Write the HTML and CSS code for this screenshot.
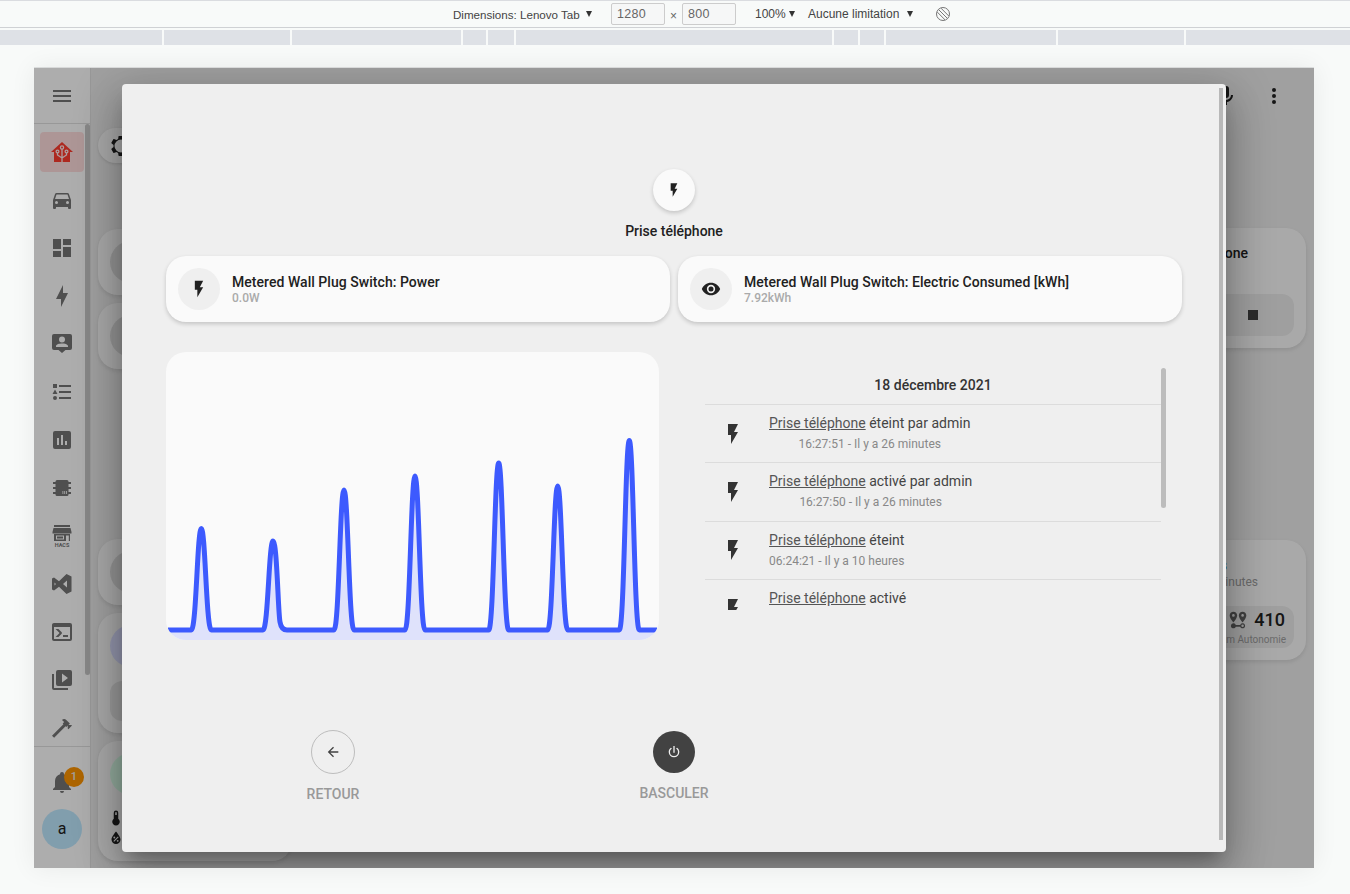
FILE: index.html
```html
<!DOCTYPE html>
<html lang="fr">
<head>
  <meta charset="UTF-8" />
  <meta name="viewport" content="width=device-width, initial-scale=1.0" />
  <title>Prise téléphone</title>
  <link rel="stylesheet" href="styles.css">
</head>
<body>
  <!-- devtools device toolbar -->
  <div class="toolbar">
    <span class="tb-device">Dimensions: Lenovo Tab</span>
    <span class="tb-arrow arrow-device"></span>
    <span class="tb-input input-w">1280</span>
    <span class="tb-times">×</span>
    <span class="tb-input input-h">800</span>
    <span class="tb-zoom">100%</span>
    <span class="tb-arrow arrow-zoom"></span>
    <span class="tb-limit">Aucune limitation</span>
    <span class="tb-arrow arrow-limit"></span>
    <svg class="tb-rotate" viewBox="0 0 16 16"><circle cx="8" cy="8" r="6.5"/><path d="M3.5 3.5L12.5 12.5M2.2 6L10 13.8M6 2.2L13.8 10"/></svg>
  </div>
  <div class="media-bar">
    <i class="seg s1"></i><i class="seg s2"></i><i class="seg s3"></i><i class="seg s4"></i><i class="seg s5"></i><i class="seg s6"></i><i class="seg s7"></i><i class="seg s8"></i><i class="seg s9"></i><i class="seg s2"></i><i class="seg s10"></i>
  </div>

  <div class="device">
    <aside class="sidebar">
      <div class="side-head">
        <svg class="icon" viewBox="0 0 24 24"><path d="M3,6H21V8H3V6M3,11H21V13H3V11M3,16H21V18H3V16Z"/></svg>
      </div>
      <div class="side-scroll">
        <nav class="side-list">
          <a class="side-item active">
            <svg class="icon home" viewBox="0 0 24 24"><path d="M12 2L23 12H20V22H4V12H1Z"/><g class="home-lines"><path d="M12 22V9M12 18L7.5 15V13M12 18L16.5 15V13"/><circle cx="12" cy="7.5" r="1.6"/><circle cx="7.5" cy="11.5" r="1.4"/><circle cx="16.5" cy="11.5" r="1.4"/></g></svg>
          </a>
          <a class="side-item"><svg class="icon" viewBox="0 0 24 24"><path d="M5,11L6.5,6.5H17.5L19,11M17.5,16A1.5,1.5 0 0,1 16,14.5A1.5,1.5 0 0,1 17.5,13A1.5,1.5 0 0,1 19,14.5A1.5,1.5 0 0,1 17.5,16M6.5,16A1.5,1.5 0 0,1 5,14.5A1.5,1.5 0 0,1 6.5,13A1.5,1.5 0 0,1 8,14.5A1.5,1.5 0 0,1 6.5,16M18.92,6C18.72,5.42 18.16,5 17.5,5H6.5C5.84,5 5.28,5.42 5.08,6L3,12V20A1,1 0 0,0 4,21H5A1,1 0 0,0 6,20V19H18V20A1,1 0 0,0 19,21H20A1,1 0 0,0 21,20V12L18.92,6Z"/></svg></a>
          <a class="side-item"><svg class="icon" viewBox="0 0 24 24"><path d="M13,3V9H21V3M13,21H21V11H13M3,21H11V15H3M3,13H11V3H3V13Z"/></svg></a>
          <a class="side-item"><svg class="icon" viewBox="0 0 24 24"><path d="M11 15H6L13 1V9H18L11 23V15Z"/></svg></a>
          <a class="side-item"><svg class="icon" viewBox="0 0 24 24"><path fill-rule="evenodd" d="M4 2H20A2 2 0 0 1 22 4V16A2 2 0 0 1 20 18H15.5L12 21L8.500 18H4A2 2 0 0 1 2 16V4A2 2 0 0 1 4 2ZM12 4.500A3 3 0 1 0 12 10.500A3 3 0 1 0 12 4.500ZM6 15V14C6 12.300 9.500 11.500 12 11.500S18 12.300 18 14V15Z"/></svg></a>
          <a class="side-item"><svg class="icon" viewBox="0 0 24 24"><path d="M5,9.5L7.5,14H2.5L5,9.5M3,4H7V8H3V4M5,20A2,2 0 0,0 7,18A2,2 0 0,0 5,16A2,2 0 0,0 3,18A2,2 0 0,0 5,20M9,5V7H21V5H9M9,19H21V17H9V19M9,13H21V11H9V13Z"/></svg></a>
          <a class="side-item"><svg class="icon" viewBox="0 0 24 24"><path fill-rule="evenodd" d="M5 3H19A2 2 0 0 1 21 5V19A2 2 0 0 1 19 21H5A2 2 0 0 1 3 19V5A2 2 0 0 1 5 3ZM7 10V17H9V10ZM11 7V17H13V7ZM15 13V17H17V13Z"/></svg></a>
          <a class="side-item"><svg class="icon" viewBox="0 0 24 24"><path fill-rule="evenodd" d="M7 4H17A1.500 1.500 0 0 1 18.500 5.500V6H21V8H18.500V11H21V13H18.500V16H21V18H18.500V18.500A1.500 1.500 0 0 1 17 20H7A1.500 1.500 0 0 1 5.500 18.500V18H3V16H5.500V13H3V11H5.500V8H3V6H5.500V5.500A1.500 1.500 0 0 1 7 4ZM12.500 15V18H13.300V15ZM14.300 15V18H15.100V15ZM16.100 15V18H16.900V15Z"/></svg></a>
          <a class="side-item"><svg class="icon" viewBox="0 0 24 24"><path fill-rule="evenodd" d="M4 1H20V3H4ZM3.500 4H20.500L21.500 8V9.500H2.500V8ZM4 10H20V17H4ZM6 11.500V15.500H14V11.500ZM7 12.500H13V14.500H7ZM16 11.500V17H18.800V11.500Z"/><text class="hacs-text" x="12" y="23.300" text-anchor="middle">HACS</text></svg></a>
          <a class="side-item"><svg class="icon" viewBox="0 0 24 24"><path fill-rule="evenodd" d="M16.500 2L21.500 4.500V19.500L16.500 22L9 14.800L4 18.500L2 17.500V6.500L4 5.500L9 9.200ZM17 8.500L13 12L17 15.500ZM4.500 10.500V13.500L6 12Z"/></svg></a>
          <a class="side-item"><svg class="icon" viewBox="0 0 24 24"><path d="M20,19V7H4V19H20M20,3A2,2 0 0,1 22,5V19A2,2 0 0,1 20,21H4A2,2 0 0,1 2,19V5C2,3.89 2.9,3 4,3H20M13,17V15H18V17H13M9.58,13L5.57,9H8.4L11.7,12.3C12.09,12.69 12.09,13.33 11.7,13.72L8.42,17H5.59L9.58,13Z"/></svg></a>
          <a class="side-item"><svg class="icon" viewBox="0 0 24 24"><path d="M4 6H2v14a2 2 0 0 0 2 2h14v-2H4V6zm16-4H8a2 2 0 0 0-2 2v12a2 2 0 0 0 2 2h12a2 2 0 0 0 2-2V4a2 2 0 0 0-2-2zm-8 12.500v-9l6 4.500-6 4.500z"/></svg></a>
          <a class="side-item"><svg class="icon" viewBox="0 0 24 24"><path d="M2 19.630L13.430 8.200L12.720 7.500L14.140 6.070L12 3.890C13.200 2.700 15.090 2.700 16.270 3.890L19.870 7.500L18.450 8.910H21.290L22 9.620L18.450 13.210L17.740 12.500V9.620L16.270 11.040L15.560 10.330L4.130 21.760L2 19.630Z"/></svg></a>
        </nav>
        <div class="side-thumb"></div>
      </div>
      <div class="side-foot">
        <div class="bell">
          <svg class="icon" viewBox="0 0 24 24"><path d="M21,19V20H3V19L5,17V11C5,7.9 7.03,5.17 10,4.29C10,4.19 10,4.1 10,4A2,2 0 0,1 12,2A2,2 0 0,1 14,4C14,4.1 14,4.19 14,4.29C16.97,5.17 19,7.9 19,11V17L21,19M14,21A2,2 0 0,1 12,23A2,2 0 0,1 10,21"/></svg>
          <span class="badge">1</span>
        </div>
        <div class="avatar">a</div>
      </div>
    </aside>

    <main class="main">
      <header class="topbar">
        <span class="top-btn"><svg class="icon dark" viewBox="0 0 24 24"><path d="M12,2A3,3 0 0,1 15,5V11A3,3 0 0,1 12,14A3,3 0 0,1 9,11V5A3,3 0 0,1 12,2M19,11C19,14.53 16.39,17.44 13,17.93V21H11V17.93C7.61,17.44 5,14.53 5,11H7A5,5 0 0,0 12,16A5,5 0 0,0 17,11H19Z"/></svg></span>
        <span class="top-btn"><svg class="icon dark" viewBox="0 0 24 24"><path d="M12,16A2,2 0 0,1 14,18A2,2 0 0,1 12,20A2,2 0 0,1 10,18A2,2 0 0,1 12,16M12,10A2,2 0 0,1 14,12A2,2 0 0,1 12,14A2,2 0 0,1 10,12A2,2 0 0,1 12,10M12,4A2,2 0 0,1 14,6A2,2 0 0,1 12,8A2,2 0 0,1 10,6A2,2 0 0,1 12,4Z"/></svg></span>
      </header>
      <div class="board">
        <div class="col-left">
          <div class="chip">
            <svg class="icon dark" viewBox="0 0 24 24"><path fill-rule="evenodd" d="M12 5.500A6.500 6.500 0 1 0 12 18.500A6.500 6.500 0 1 0 12 5.500ZM10,22C9.75,22 9.54,21.82 9.5,21.58L9.13,18.93C8.5,18.68 7.96,18.34 7.44,17.94L4.95,18.95C4.73,19.03 4.46,18.95 4.34,18.73L2.34,15.27C2.21,15.05 2.27,14.78 2.46,14.63L4.57,12.97L4.5,12L4.57,11L2.46,9.37C2.27,9.22 2.21,8.95 2.34,8.73L4.34,5.27C4.46,5.05 4.73,4.96 4.95,5.05L7.44,6.05C7.96,5.66 8.5,5.32 9.13,5.07L9.5,2.42C9.54,2.18 9.75,2 10,2H14C14.25,2 14.46,2.18 14.5,2.42L14.87,5.07C15.5,5.32 16.04,5.66 16.56,6.05L19.05,5.05C19.27,4.96 19.54,5.05 19.66,5.27L21.66,8.73C21.79,8.95 21.73,9.22 21.54,9.37L19.43,11L19.5,12L19.43,13L21.54,14.63C21.73,14.78 21.79,15.05 21.66,15.27L19.66,18.73C19.54,18.95 19.27,19.04 19.05,18.95L16.56,17.95C16.04,18.34 15.5,18.68 14.87,18.93L14.5,21.58C14.46,21.82 14.25,22 14,22H10Z"/></svg>
          </div>
          <div class="tile first"><span class="tile-dot"></span></div>
          <div class="tile"><span class="tile-dot"></span></div>
          <div class="tile second"><span class="tile-dot"></span></div>
          <div class="tile tall">
            <span class="tile-dot blue"></span>
            <span class="tile-panel"></span>
          </div>
          <div class="tile tall">
            <span class="tile-dot green"></span>
            <svg class="mini thermo" viewBox="0 0 24 24"><path d="M15 13V5A3 3 0 0 0 9 5V13A5 5 0 1 0 15 13M12 4A1 1 0 0 1 13 5V8H11V5A1 1 0 0 1 12 4Z"/></svg>
            <svg class="mini" viewBox="0 0 24 24"><path d="M12,3.25C12,3.25 6,10 6,14C6,17.32 8.69,20 12,20A6,6 0 0,0 18,14C18,10 12,3.25 12,3.25M14.47,9.97L15.53,11.03L9.53,17.03L8.47,15.97M9.75,10A1.25,1.25 0 0,1 11,11.25A1.25,1.25 0 0,1 9.75,12.5A1.25,1.25 0 0,1 8.5,11.25A1.25,1.25 0 0,1 9.75,10M14.25,14.5A1.25,1.25 0 0,1 15.5,15.75A1.25,1.25 0 0,1 14.25,17A1.25,1.25 0 0,1 13,15.75A1.25,1.25 0 0,1 14.25,14.5Z"/></svg>
          </div>
        </div>
        <div class="col-right">
          <div class="block first">
            <div class="block-name">Prise téléphone</div>
            <div class="block-panel">
              <svg class="stop" viewBox="0 0 24 24"><path d="M18,18H6V6H18V18Z"/></svg>
            </div>
          </div>
          <div class="block second">
            <div class="block-tag">Connectés</div>
            <div class="block-sub">Il y a 26 minutes</div>
            <div class="block-panel range">
              <div class="range-top">
                <svg class="range-icon" viewBox="0 0 24 24"><path d="M6.5 8.11C5.61 8.11 4.89 7.39 4.89 6.5A1.61 1.61 0 0 1 6.5 4.89C7.39 4.89 8.11 5.61 8.11 6.5V6.5A1.61 1.61 0 0 1 6.5 8.11M6.5 2C4 2 2 4 2 6.5C2 9.87 6.5 14.86 6.5 14.86S11 9.87 11 6.5C11 4 9 2 6.5 2M17.5 8.11A1.61 1.61 0 0 1 15.89 6.5C15.89 5.61 16.61 4.89 17.5 4.89C18.39 4.89 19.11 5.61 19.11 6.5A1.61 1.61 0 0 1 17.5 8.11M17.5 2C15 2 13 4 13 6.5C13 9.87 17.5 14.86 17.5 14.86S22 9.87 22 6.5C22 4 20 2 17.5 2M17.5 16C16.23 16 15.1 16.8 14.68 18H9.32C8.77 16.44 7.05 15.62 5.5 16.17C3.93 16.72 3.11 18.44 3.66 20C4.22 21.56 5.93 22.38 7.5 21.83C8.35 21.53 9 20.85 9.32 20H14.69C15.24 21.56 16.96 22.38 18.5 21.83C20.08 21.28 20.9 19.56 20.35 18C19.92 16.8 18.78 16 17.5 16M17.5 20.5A1.5 1.5 0 0 1 16 19A1.5 1.5 0 0 1 17.5 17.5A1.5 1.5 0 0 1 19 19A1.5 1.5 0 0 1 17.5 20.5Z"/></svg>
                <span class="range-value">410</span>
              </div>
              <div class="range-label">km Autonomie</div>
            </div>
          </div>
        </div>
      </div>
    </main>

    <div class="scrim"></div>

    <div class="dialog">
      <div class="dialog-thumb"></div>
      <div class="head-icon">
        <svg class="bolt-16" viewBox="0 0 24 24"><path d="M7,2V13H10V22L17,10H13L17,2H7Z"/></svg>
      </div>
      <div class="head-title">Prise téléphone</div>

      <div class="entity-row">
        <div class="entity">
          <span class="entity-icon"><svg class="bolt-20" viewBox="0 0 24 24"><path d="M7,2V13H10V22L17,10H13L17,2H7Z"/></svg></span>
          <div>
            <div class="entity-name">Metered Wall Plug Switch: Power</div>
            <div class="entity-state">0.0W</div>
          </div>
        </div>
        <div class="entity">
          <span class="entity-icon"><svg class="bolt-20" viewBox="0 0 24 24"><path d="M12,9A3,3 0 0,0 9,12A3,3 0 0,0 12,15A3,3 0 0,0 15,12A3,3 0 0,0 12,9M12,17A5,5 0 0,1 7,12A5,5 0 0,1 12,7A5,5 0 0,1 17,12A5,5 0 0,1 12,17M12,4.5C7,4.5 2.73,7.61 1,12C2.73,16.39 7,19.5 12,19.5C17,19.5 21.27,16.39 23,12C21.27,7.61 17,4.5 12,4.5Z"/></svg></span>
          <div>
            <div class="entity-name">Metered Wall Plug Switch: Electric Consumed [kWh]</div>
            <div class="entity-state">7.92kWh</div>
          </div>
        </div>
      </div>

      <div class="detail-row">
        <div class="chart">
          <svg class="chart-svg" viewBox="0 0 493 288">
            <path class="chart-fill" d="M0 278H25.300C30.300 278 31.300 176.500 35.300 176.500C39.300 176.500 40.300 278 45.300 278H97C102 278 103 189 107 189C111 189 112 260 114 270C115 276 118 278 121 278H168C173 278 174 138 178 138C182 138 183 278 188 278H239C244 278 245 124 249 124C253 124 254 278 259 278H322.700C327.700 278 328.700 111 332.700 111C336.700 111 337.700 278 342.700 278H381.700C386.700 278 387.700 134 391.700 134C395.700 134 396.700 278 401.700 278H453.300C458.300 278 459.300 88.500 463.300 88.500C467.300 88.500 468.300 278 473.300 278H493V288H0Z"/>
            <path class="chart-line" d="M2 278H25.300C30.300 278 31.300 176.500 35.300 176.500C39.300 176.500 40.300 278 45.300 278H97C102 278 103 189 107 189C111 189 112 260 114 270C115 276 118 278 121 278H168C173 278 174 138 178 138C182 138 183 278 188 278H239C244 278 245 124 249 124C253 124 254 278 259 278H322.700C327.700 278 328.700 111 332.700 111C336.700 111 337.700 278 342.700 278H381.700C386.700 278 387.700 134 391.700 134C395.700 134 396.700 278 401.700 278H453.300C458.300 278 459.300 88.500 463.300 88.500C467.300 88.500 468.300 278 473.300 278H491"/>
          </svg>
        </div>

        <div class="logbook">
          <div class="log-list">
            <div class="log-date">18 décembre 2021</div>
            <div class="log-row">
              <svg class="log-icon" viewBox="0 0 24 24"><path d="M7,2V13H10V22L17,10H13L17,2H7Z"/></svg>
              <div class="log-msg">
                <div class="log-text"><a>Prise téléphone</a> éteint par admin</div>
                <div class="log-time">16:27:51 - Il y a 26 minutes</div>
              </div>
            </div>
            <div class="log-row">
              <svg class="log-icon" viewBox="0 0 24 24"><path d="M7,2V13H10V22L17,10H13L17,2H7Z"/></svg>
              <div class="log-msg">
                <div class="log-text"><a>Prise téléphone</a> activé par admin</div>
                <div class="log-time">16:27:50 - Il y a 26 minutes</div>
              </div>
            </div>
            <div class="log-row">
              <svg class="log-icon" viewBox="0 0 24 24"><path d="M7,2V13H10V22L17,10H13L17,2H7Z"/></svg>
              <div class="log-msg">
                <div class="log-text"><a>Prise téléphone</a> éteint</div>
                <div class="log-time">06:24:21 - Il y a 10 heures</div>
              </div>
            </div>
            <div class="log-row">
              <svg class="log-icon" viewBox="0 0 24 24"><path d="M7,2V13H10V22L17,10H13L17,2H7Z"/></svg>
              <div class="log-msg">
                <div class="log-text"><a>Prise téléphone</a> activé</div>
              </div>
            </div>
          </div>
          <div class="log-thumb"></div>
        </div>
      </div>

      <div class="actions">
        <div class="action">
          <span class="action-btn outline"><svg class="action-icon" viewBox="0 0 24 24"><path d="M20,11V13H8L13.5,18.5L12.08,19.92L4.16,12L12.08,4.08L13.5,5.5L8,11H20Z"/></svg></span>
          <span class="action-label">RETOUR</span>
        </div>
        <div class="action">
          <span class="action-btn solid"><svg class="action-icon" viewBox="0 0 24 24"><path d="M16.56,5.44L15.11,6.89C16.84,7.94 18,9.83 18,12A6,6 0 0,1 12,18A6,6 0 0,1 6,12C6,9.83 7.16,7.94 8.88,6.88L7.44,5.44C5.36,6.88 4,9.28 4,12A8,8 0 0,0 12,20A8,8 0 0,0 20,12C20,9.28 18.64,6.88 16.56,5.44M13,3H11V13H13"/></svg></span>
          <span class="action-label">BASCULER</span>
        </div>
      </div>
    </div>
  </div>
</body>
</html>
```

FILE: styles.css
```css
* { box-sizing: border-box; }
body { margin: 0; height: 894px; overflow: hidden; background: #f8faf9; font-family: Roboto, "Liberation Sans", sans-serif; color: #212121; }

/* devtools bars */
.toolbar { height: 28px; display: flex; align-items: center; padding-left: 453px; border-top: 1px solid #dadce0; border-bottom: 1px solid #cfd1d4; font-family: "Liberation Sans", sans-serif; font-size: 12px; color: #444; white-space: nowrap; }
.tb-device { width: 127px; font-size: 11.600px; }
.tb-arrow { width: 0; height: 0; border-left: 3.5px solid transparent; border-right: 3.5px solid transparent; border-top: 6px solid #333; }
.arrow-device { margin-left: 6px; }
.tb-input { width: 54px; height: 22px; line-height: 20px; margin-left: 19px; padding-left: 5px; border: 1px solid #ccc; border-radius: 2px; color: #666; background: #f6f7f7; font-size: 12.500px; letter-spacing: 0.3px; }
.tb-times { width: 17px; text-align: center; color: #666; margin-top: 3px; }
.input-h { margin-left: 0; }
.tb-zoom { margin-left: 19px; width: 34px; }
.tb-limit { margin-left: 13px; width: 99px; }
.tb-rotate { width: 16px; height: 16px; margin-left: 22px; fill: none; stroke: #777; stroke-width: 1; }
.media-bar { display: flex; gap: 2px; height: 15px; margin-top: 2px; }
.seg { height: 15px; background: #dee1e6; display: block; }
.s1 { width: 162px; }
.s2 { width: 126px; }
.s3 { width: 169px; }
.s4 { width: 23px; }
.s5 { width: 26px; }
.s6 { width: 316px; }
.s7 { width: 24px; }
.s8 { width: 24px; }
.s9 { width: 170px; }
.s10 { flex: 1; }

/* the home assistant page in the device frame */
.device { position: relative; display: flex; width: 1280px; height: 800px; margin: 23px 0 0 34px; overflow: hidden; background: #ececec; box-shadow: 0 0 24px rgba(0,0,0,.07), 0 -1px 0 #dfe1e1; }
.sidebar { width: 57px; height: 800px; display: flex; flex-direction: column; flex-shrink: 0; background: #fff; border-right: 1px solid #e0e0e0; }
.side-head { height: 56px; flex-shrink: 0; display: flex; align-items: center; padding-left: 16px; border-bottom: 1px solid #e0e0e0; }
.side-scroll { display: flex; height: 622px; overflow: hidden; }
.side-list { width: 51px; padding-top: 4px; flex-shrink: 0; }
.side-item { display: flex; align-items: center; height: 48px; padding-left: 16px; }
.side-item.active { position: relative; }
.side-item.active::before { content: ""; position: absolute; left: 6px; top: 4px; width: 44px; height: 40px; border-radius: 4px; background: #ffdede; }
.side-item.active .icon { position: relative; }
.side-thumb { width: 5px; height: 551px; border-radius: 3px; background: #c8c8c8; }
.side-foot { flex: 1; padding-top: 11px; border-top: 1px solid #e0e0e0; }
.bell { position: relative; height: 48px; display: flex; align-items: center; padding-left: 16px; }
.badge { position: absolute; left: 30px; top: 9px; width: 20px; height: 20px; border-radius: 50%; background: #ff9500; color: #eee; font-size: 11px; font-weight: 500; line-height: 20px; text-align: center; }
.avatar { width: 40px; height: 40px; margin: 3px 0 0 8px; border-radius: 50%; background: #bfe9ff; color: #212121; font-size: 16px; line-height: 40px; text-align: center; }
.icon { width: 24px; height: 24px; fill: #757575; flex-shrink: 0; }
.icon.dark { fill: #212121; }
.icon.home { fill: #ff3c2e; }
.home-lines { fill: none; stroke: #ffeaea; stroke-width: 1.300; }
.hacs-text { font-size: 5.500px; font-weight: 700; font-family: Roboto, sans-serif; fill: #757575; }

.main { flex: 1; min-width: 0; }
.topbar { height: 56px; display: flex; justify-content: flex-end; padding-right: 16px; }
.top-btn { width: 48px; height: 56px; display: flex; align-items: center; justify-content: center; }
.board { display: flex; justify-content: space-between; padding: 4px 8px 0 7px; }
.col-left { width: 194px; display: flex; flex-direction: column; gap: 8px; }
.chip { width: 120px; height: 35px; padding: 6px 0 0 11px; border-radius: 18px; background: #fafafa; box-shadow: 0 1px 3px rgba(0,0,0,.12); margin-bottom: 58px; }
.tile { height: 66px; padding: 12px; border-radius: 20px; background: #fafafa; box-shadow: 0 2px 4px rgba(0,0,0,.1); }
.tile.second { margin-top: 162px; }
.tile.tall { height: 120px; }
.tile-dot { display: block; width: 42px; height: 42px; border-radius: 50%; background: #dcdcdc; }
.tile-dot.blue { background: #dadeff; }
.tile-dot.green { background: #d8fde8; }
.tile-panel { display: block; width: 170px; height: 40px; margin-top: 14px; border-radius: 12px; background: #e4e4e4; }
.mini { display: block; width: 18px; height: 18px; margin-left: -3px; fill: #212121; }
.mini.thermo { margin-top: 14px; margin-bottom: 2px; }

.col-right { width: 200px; }
.block { height: 120px; padding: 15px 12px 0; border-radius: 20px; background: #fafafa; box-shadow: 0 2px 4px rgba(0,0,0,.1); }
.block.first { margin-top: 100px; }
.block.second { margin-top: 192px; padding-top: 17px; }
.block-name { height: 20px; padding-right: 46px; font-size: 14px; font-weight: 500; line-height: 20px; text-align: right; white-space: nowrap; }
.block-panel { height: 42px; margin-top: 31px; display: flex; align-items: center; justify-content: flex-end; padding-right: 31px; border-radius: 12px; background: #eaeaea; }
.stop { width: 20px; height: 20px; fill: #424242; }
.block-tag { height: 16px; padding-right: 67px; color: #1976d2; font-size: 14px; font-weight: 500; line-height: 16px; text-align: right; }
.block-sub { height: 16px; margin-top: 1px; padding-right: 36px; color: #9e9e9e; font-size: 12px; line-height: 16px; text-align: right; }
.block-panel.range { display: block; margin-top: 16px; padding: 3px 8px 0 0; }
.range-top { display: flex; justify-content: flex-end; align-items: center; gap: 6px; height: 22px; padding-right: 1px; }
.range-icon { width: 20px; height: 20px; fill: #616161; }
.range-value { font-size: 18px; font-weight: 500; line-height: 22px; }
.range-label { margin-top: 2px; font-size: 10px; line-height: 14px; color: #9e9e9e; text-align: right; white-space: nowrap; }

.scrim { position: absolute; inset: 0; background: rgba(0,0,0,.32); }

/* more-info dialog */
.dialog { position: absolute; left: 88px; top: 16px; width: 1104px; height: 768px; padding: 85px 44px 0; border-radius: 4px; background: #efefef; box-shadow: 0 11px 15px -7px rgba(0,0,0,.25), 0 24px 38px 3px rgba(0,0,0,.18), 0 9px 46px 8px rgba(0,0,0,.16); }
.dialog-thumb { position: absolute; right: 3px; top: 4px; width: 4px; height: 752px; background: #b8b8b8; }
.head-icon { width: 42px; height: 42px; margin: 0 auto; display: flex; align-items: center; justify-content: center; border-radius: 50%; background: #fafafa; box-shadow: 0 2px 4px rgba(0,0,0,.18); }
.bolt-16 { width: 16px; height: 16px; fill: #212121; }
.bolt-20 { width: 20px; height: 20px; fill: #212121; }
.head-title { margin-top: 10px; font-size: 14px; font-weight: 500; line-height: 20px; text-align: center; }
.entity-row { display: grid; grid-template-columns: 504px 504px; gap: 8px; margin-top: 15px; }
.entity { height: 66px; display: flex; align-items: center; gap: 12px; padding: 0 12px; border-radius: 20px; background: #fafafa; box-shadow: 0 2px 4px rgba(0,0,0,.18); }
.entity-icon { width: 42px; height: 42px; display: flex; align-items: center; justify-content: center; border-radius: 50%; background: #efefef; }
.entity-name { font-size: 14px; font-weight: 500; line-height: 17px; letter-spacing: 0.04px; }
.entity-state { font-size: 12px; font-weight: 500; line-height: 14px; color: #aaa; }

.detail-row { display: flex; gap: 46px; margin-top: 30px; }
.chart { width: 493px; height: 288px; overflow: hidden; border-radius: 20px; background: #fafafa; }
.chart-svg { display: block; width: 493px; height: 288px; }
.chart-fill { fill: #dfe2fb; }
.chart-line { fill: none; stroke: #3d5afe; stroke-width: 5; }
.logbook { display: flex; width: 461px; height: 242px; margin-top: 16px; overflow: hidden; }
.log-list { width: 456px; flex-shrink: 0; }
.log-date { height: 37px; border-bottom: 1px solid #dcdcdc; font-size: 14px; font-weight: 500; line-height: 35px; text-align: center; color: #333; }
.log-row { height: 58.400px; display: flex; align-items: center; gap: 24px; padding-left: 16px; border-bottom: 1px solid #dcdcdc; }
.log-icon { width: 24px; height: 24px; fill: #333; flex-shrink: 0; }
.log-msg { text-align: center; align-self: flex-start; padding-top: 8px; }
.log-text { font-size: 14px; line-height: 20px; color: #444; }
.log-text a { color: #555; text-decoration: underline; }
.log-time { margin-top: 3px; font-size: 12px; line-height: 16px; color: #888; }
.log-thumb { width: 5px; height: 140px; border-radius: 3px; background: #bcbcbc; }

.actions { display: grid; grid-template-columns: 341px 341px 341px; justify-content: center; align-items: center; margin-top: 90px; }
.action { display: flex; flex-direction: column; align-items: center; gap: 10px; }
.action-btn { width: 44px; height: 44px; display: flex; align-items: center; justify-content: center; border-radius: 50%; }
.action-btn.outline { border: 1px solid #bdbdbd; }
.action-btn.solid { width: 42px; height: 42px; background: #424242; }
.action-icon { width: 16px; height: 16px; fill: #424242; }
.solid .action-icon { fill: #eee; }
.action-label { font-size: 14px; font-weight: 500; line-height: 20px; color: #999; }
```
